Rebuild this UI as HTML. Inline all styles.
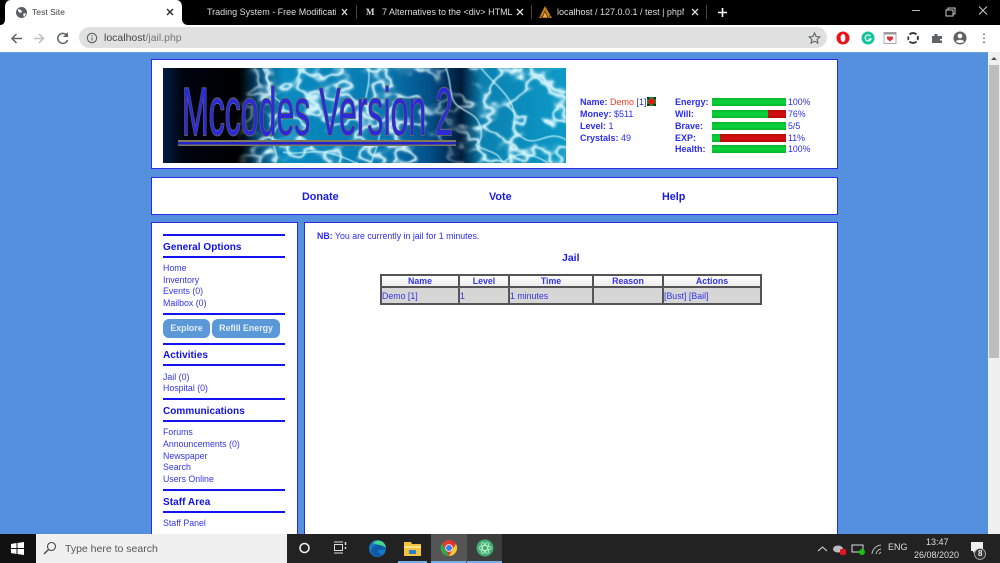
<!DOCTYPE html>
<html style="background:#5590de"><head><meta charset="utf-8"><title>Test Site</title>
<style>
*{box-sizing:border-box}
html,body{margin:0;padding:0;width:1000px;height:563px;overflow:hidden;background:#5590de;font-family:"Liberation Sans",sans-serif}
#w{position:absolute;left:0;top:0;width:1000px;height:563px;overflow:hidden;filter:blur(.35px)}
.a{position:absolute;white-space:nowrap}
.p{position:absolute;background:#fff;border:1px solid #2a2ae0}
.t{font-size:8.8px;color:#2c2cf0;line-height:11px}
.b{font-weight:bold}
.hr{position:absolute;left:163px;width:122px;height:2px;background:#1414f0}
.h{position:absolute;left:163px;font:bold 10px "Liberation Sans",sans-serif;letter-spacing:.05px;color:#1010e8;white-space:nowrap;line-height:12px}
.l{position:absolute;left:163px;font-size:8.8px;color:#3434ea;white-space:nowrap;line-height:11px}
.bar{position:absolute;left:712px;width:74px;height:8px;background:linear-gradient(#05b52d,#0ad53c 50%,#05b52d)}
.bar i{position:absolute;right:0;top:0;height:8px;background:linear-gradient(#b80a0a,#d81010 50%,#b80a0a)}
.btn{position:absolute;top:319px;height:19px;background:#5b98d8;border-radius:6px;color:#e4eefa;font:bold 8.8px/19px "Liberation Sans",sans-serif;text-align:center}
.nav{position:absolute;top:191px;font:bold 10.8px/12px "Liberation Sans",sans-serif;color:#1a1ae6}
.tab{position:absolute;top:7px;font-size:9px;line-height:11px;color:#ddd;white-space:nowrap;overflow:hidden}
td,th{border:2px solid #555;font-size:8.8px;padding:0;color:#3434ea;font-weight:normal;text-align:left}
th{font-weight:bold;text-align:center;background:linear-gradient(#fff,#ececec);height:12px}
td{background:#d6d6d6;height:16px}
</style></head><body><div id="w">

<!-- tab strip -->
<div class="a" style="left:0;top:0;width:1000px;height:25px;background:#000"></div>
<svg class="a" style="left:0;top:0" width="190" height="25"><path d="M0 25C4 25 5 22 5 19V7C5 3 7 0 11 0H176C180 0 182 3 182 7V19C182 22 184 25 188 25Z" fill="#fff"/></svg>
<svg class="a" style="left:15px;top:6px" width="13" height="13" viewBox="0 0 13 13"><circle cx="6.5" cy="6.5" r="5.500" fill="#5a5f66"/><path d="M3 3l3 1 1 2-2 1-2-2zM8 8l2-1 1 1-2 3z" fill="#fff"/></svg>
<div class="tab" style="left:32px;color:#444;font-size:8.600px">Test Site</div>
<svg class="a" style="left:166px;top:8px" width="8" height="8"><path d="M1 1l6 6M7 1l-6 6" stroke="#333" stroke-width="1.500"/></svg>
<div class="tab" style="left:207px;width:129px">Trading System - Free Modificatio</div>
<svg class="a" style="left:341px;top:8px" width="7" height="8"><path d="M1 1l5 6M6 1l-5 6" stroke="#ddd" stroke-width="1.300"/></svg>
<div class="a" style="left:356px;top:5px;width:1px;height:14px;background:#444"></div>
<div class="a" style="left:366px;top:7px;font:bold 9px/11px 'Liberation Serif',serif;color:#ddd">M</div>
<div class="tab" style="left:382px;width:131px">7 Alternatives to the &lt;div&gt; HTML</div>
<svg class="a" style="left:516px;top:8px" width="8" height="8"><path d="M1 1l6 6M7 1l-6 6" stroke="#ddd" stroke-width="1.300"/></svg>
<div class="a" style="left:531px;top:5px;width:1px;height:14px;background:#444"></div>
<svg class="a" style="left:539px;top:6px" width="13" height="12"><path d="M0 12L6 0l7 12z" fill="#c9821f"/><path d="M3 12L6 5l3 7zM1 9l2 3M11 9l-1 3" stroke="#6a3f12" stroke-width="1" fill="#f0b040"/></svg>
<div class="tab" style="left:557px;width:127px">localhost / 127.0.0.1 / test | phpMy</div>
<svg class="a" style="left:691px;top:8px" width="8" height="8"><path d="M1 1l6 6M7 1l-6 6" stroke="#ddd" stroke-width="1.300"/></svg>
<div class="a" style="left:706px;top:5px;width:1px;height:14px;background:#444"></div>
<svg class="a" style="left:717px;top:7px" width="11" height="11"><path d="M5.500 1v9M1 5.500h9" stroke="#fff" stroke-width="1.600"/></svg>
<svg class="a" style="left:908px;top:4px" width="90" height="16"><path d="M4 6.500h8" stroke="#bbb"/><path d="M38 6h7v6h-7zM40 6V4h7v6h-2" stroke="#ccc" fill="none"/><path d="M71 2.500l8 8M79 2.500l-8 8" stroke="#ccc"/></svg>

<!-- toolbar -->
<div class="a" style="left:0;top:25px;width:1000px;height:27px;background:#fff"></div>
<svg class="a" style="left:8px;top:29px" width="66" height="19" fill="none"><path d="M14 9.500H4M8.500 5l-4.500 4.500 4.500 4.500" stroke="#5f6368" stroke-width="1.500"/><path d="M35 9.500H26M31 5l4.500 4.500-4.500 4.500" stroke="#bcbfc3" stroke-width="1.500"/><path d="M58.500 6A5 5 0 1 0 59.500 11" stroke="#5f6368" stroke-width="1.500"/><path d="M60 3v5h-5z" fill="#5f6368"/></svg>
<div class="a" style="left:79px;top:27px;width:748px;height:21px;border-radius:11px;background:#e0e0e1"></div>
<svg class="a" style="left:86px;top:32px" width="12" height="12" fill="none"><circle cx="6" cy="6" r="4.700" stroke="#5f6368" stroke-width="1.100"/><path d="M6 5.500v3M6 3.200v1.200" stroke="#5f6368" stroke-width="1.100"/></svg>
<div class="a" style="left:104px;top:32px;font-size:10.500px;line-height:13px;color:#444">localhost<span style="color:#777">/jail.php</span></div>
<svg class="a" style="left:808px;top:32px" width="13" height="12"><path d="M6.500 1l1.600 3.500 3.800.4-2.800 2.500.8 3.700-3.400-1.900-3.400 1.900.8-3.700L1.100 4.900l3.800-.4z" fill="none" stroke="#5f6368" stroke-width="1.100"/></svg>
<svg class="a" style="left:835px;top:29px" width="155" height="19" fill="none">
<circle cx="8" cy="9" r="6.500" fill="#f0101a"/><ellipse cx="8" cy="9" rx="2.400" ry="4" fill="#fff"/>
<circle cx="33" cy="9" r="6.500" fill="#15c39a"/><path d="M35.500 7a3 3 0 1 0 .5 3h-2.500" stroke="#fff" stroke-width="1.200"/>
<path d="M49 3.500h12v11H49z" fill="#fff" stroke="#aaa"/><path d="M49 3.500h12v2H49z" fill="#999"/><path d="M52 7.500h6v2.500l-3 2.500-3-2.500z" fill="#e0303a"/>
<path d="M74.500 5.500a5 5 0 0 1 7 0M81.500 12.500a5 5 0 0 1-7 0M73.500 7.500a5 5 0 0 0 0 3.500M82.500 7a5 5 0 0 1 0 4" stroke="#333" stroke-width="1.800"/>
<path d="M97 7h2.500V5h3v2H107v3h-2v1.500h2V14h-10z" fill="#5f6368"/>
<circle cx="125" cy="9" r="6.500" fill="#5f6368"/><circle cx="125" cy="7" r="2.300" fill="#fff"/><path d="M120.800 12.500c1.500-2.400 6.900-2.400 8.400 0-2 2-6.400 2-8.400 0z" fill="#fff"/>
<path d="M149 4.500v1.500M149 8.500V10M149 12.500V14" stroke="#5f6368" stroke-width="1.500"/>
</svg>

<!-- scrollbar -->
<div class="a" style="left:988px;top:52px;width:12px;height:482px;background:#f0f0f0"></div>
<div class="a" style="left:989px;top:65px;width:10px;height:293px;background:#bdbdbd"></div>
<svg class="a" style="left:990px;top:56px" width="8" height="5"><path d="M1 4l3-3 3 3z" fill="#555"/></svg>
<div class="a" style="left:0;top:52px;width:988px;height:1px;background:#6ba0e2"></div>

<!-- header panel -->
<div class="p" style="left:151px;top:59px;width:687px;height:110px"></div>
<svg class="a" style="left:163px;top:68px" width="403" height="95" viewBox="0 0 403 95">
<defs>
<linearGradient id="g"><stop offset="0" stop-color="#021e42"/><stop offset=".05" stop-color="#000410"/><stop offset=".19" stop-color="#000"/><stop offset=".24" stop-color="#024878"/><stop offset=".3" stop-color="#0a8cc0"/><stop offset=".55" stop-color="#0878b0"/><stop offset=".66" stop-color="#03508a"/><stop offset=".74" stop-color="#011a38"/><stop offset=".79" stop-color="#0a80b0"/><stop offset="1" stop-color="#0d9ac8"/></linearGradient>
<linearGradient id="fade"><stop offset=".18" stop-color="#000"/><stop offset=".26" stop-color="#fff"/><stop offset=".62" stop-color="#fff"/><stop offset=".72" stop-color="#444"/><stop offset=".78" stop-color="#fff"/></linearGradient>
<mask id="m"><rect width="403" height="95" fill="url(#fade)"/></mask>
<filter id="veins" x="0" y="0" width="100%" height="100%">
<feTurbulence type="fractalNoise" baseFrequency=".028 .035" numOctaves="3" seed="7"/>
<feColorMatrix type="matrix" values="0 0 0 0 .72  0 0 0 0 .96  0 0 0 0 1  1.600 0 0 0 -.3"/>
<feComponentTransfer><feFuncA type="table" tableValues="0 0 0 0 .15 1 .15 0 0 0 0 0"/></feComponentTransfer>
<feGaussianBlur stdDeviation=".4"/>
</filter>
<filter id="bl"><feGaussianBlur stdDeviation=".6"/></filter>
</defs>
<rect width="403" height="95" fill="url(#g)"/>
<g mask="url(#m)"><rect width="403" height="95" filter="url(#veins)"/></g>
<g fill="none" stroke="#c8f6ff" stroke-width="1.300" filter="url(#bl)" opacity=".9">
<path d="M100 0C108 15 105 25 115 32S120 50 112 62 118 85 112 95"/>
<path d="M205 0C210 20 195 35 208 45S218 70 208 95"/>
<path d="M283 0C290 20 285 30 295 38S315 45 318 62 305 75 318 80 335 85 340 95"/>
<path d="M318 0C330 15 345 25 350 40S345 60 360 70 385 60 403 72"/>
<path d="M120 84C135 88 150 80 170 86S190 95 195 95M340 95C350 85 365 82 385 95"/>
</g>
<text x="19" y="67" font-family="Liberation Sans,sans-serif" font-size="68" textLength="271" lengthAdjust="spacingAndGlyphs" fill="#2a2ad8" stroke="#6e6a58" stroke-width="1.800" paint-order="stroke">Mccodes Version 2</text>
<rect x="15" y="72" width="278" height="6" fill="#7f7a5e"/>
<rect x="15" y="74" width="278" height="2.500" fill="#2222c8"/>
</svg>

<div class="a t" style="left:580px;top:97px;font-size:9px"><span class="b">Name:</span> <span style="color:#f03a1a">Demo</span> [1]</div>
<svg class="a" style="left:647px;top:97px" width="9" height="9"><rect width="9" height="9" fill="#1a8a2a"/><path d="M0 0l2 2M9 0L7 2M0 9l2-2M9 9L7 7" stroke="#111" stroke-width="1.500"/><circle cx="4.500" cy="4.500" r="3" fill="#ee1111"/></svg>
<div class="a t" style="left:580px;top:109px;font-size:9px"><span class="b">Money:</span> $511</div>
<div class="a t" style="left:580px;top:121px;font-size:9px"><span class="b">Level:</span> 1</div>
<div class="a t" style="left:580px;top:133px;font-size:9px"><span class="b">Crystals:</span> 49</div>

<div class="a t b" style="left:675px;top:97px;font-size:9px">Energy:</div>
<div class="a t b" style="left:675px;top:109px;font-size:9px">Will:</div>
<div class="a t b" style="left:675px;top:121px;font-size:9px">Brave:</div>
<div class="a t b" style="left:675px;top:133px;font-size:9px">EXP:</div>
<div class="a t b" style="left:675px;top:144px;font-size:9px">Health:</div>
<div class="bar" style="top:98px"></div>
<div class="bar" style="top:110px"><i style="width:18px"></i></div>
<div class="bar" style="top:122px"></div>
<div class="bar" style="top:134px"><i style="width:66px"></i></div>
<div class="bar" style="top:145px"></div>
<div class="a t" style="left:788px;top:97px">100%</div>
<div class="a t" style="left:788px;top:109px">76%</div>
<div class="a t" style="left:788px;top:121px">5/5</div>
<div class="a t" style="left:788px;top:133px">11%</div>
<div class="a t" style="left:788px;top:144px">100%</div>

<!-- nav panel -->
<div class="p" style="left:151px;top:177px;width:687px;height:38px"></div>
<div class="nav" style="left:302px">Donate</div>
<div class="nav" style="left:489px">Vote</div>
<div class="nav" style="left:662px">Help</div>

<!-- sidebar -->
<div class="p" style="left:151px;top:222px;width:147px;height:330px"></div>
<div class="hr" style="top:234px"></div>
<div class="h" style="top:242px">General Options</div>
<div class="hr" style="top:256px"></div>
<div class="l" style="top:263px">Home</div>
<div class="l" style="top:275px">Inventory</div>
<div class="l" style="top:286px">Events (0)</div>
<div class="l" style="top:298px">Mailbox (0)</div>
<div class="hr" style="top:313px"></div>
<div class="btn" style="left:163px;width:47px">Explore</div>
<div class="btn" style="left:212px;width:68px">Refill Energy</div>
<div class="hr" style="top:343px"></div>
<div class="h" style="top:350px">Activities</div>
<div class="hr" style="top:364px"></div>
<div class="l" style="top:372px">Jail (0)</div>
<div class="l" style="top:383px">Hospital (0)</div>
<div class="hr" style="top:398px"></div>
<div class="h" style="top:406px">Communications</div>
<div class="hr" style="top:420px"></div>
<div class="l" style="top:427px">Forums</div>
<div class="l" style="top:439px">Announcements (0)</div>
<div class="l" style="top:451px">Newspaper</div>
<div class="l" style="top:462px">Search</div>
<div class="l" style="top:474px">Users Online</div>
<div class="hr" style="top:489px"></div>
<div class="h" style="top:497px">Staff Area</div>
<div class="hr" style="top:511px"></div>
<div class="l" style="top:518px">Staff Panel</div>

<!-- main -->
<div class="p" style="left:304px;top:222px;width:534px;height:330px"></div>
<div class="a t" style="left:317px;top:231px"><span class="b">NB:</span> You are currently in jail for 1 minutes.</div>
<div class="a b" style="left:562px;top:252px;font-size:10.500px;line-height:13px;color:#1a1ae6">Jail</div>
<table class="a" style="left:380px;top:274px;width:382px;height:31px;border-collapse:collapse;table-layout:fixed">
<tr><th style="width:78px">Name</th><th style="width:50px">Level</th><th style="width:84px">Time</th><th style="width:70px">Reason</th><th>Actions</th></tr>
<tr><td>Demo [1]</td><td>1</td><td>1 minutes</td><td></td><td>[Bust] [Bail]</td></tr>
</table>

<!-- taskbar -->
<div class="a" style="left:0;top:534px;width:1000px;height:29px;background:#222"></div>
<div class="a" style="left:0;top:534px;width:36px;height:29px;background:#111"></div>
<svg class="a" style="left:11px;top:542px" width="13" height="13"><path d="M0 2l5.500-1v5H0zM6.500 1L13 0v6H6.500zM0 7h5.500v5L0 11zM6.500 7H13v6l-6.500-1z" fill="#fff"/></svg>
<div class="a" style="left:36px;top:534px;width:251px;height:29px;background:#f0f0f0"></div>
<svg class="a" style="left:43px;top:541px" width="14" height="15" fill="none"><circle cx="8.500" cy="5.500" r="4" stroke="#444" stroke-width="1.100"/><path d="M5.500 8.500L1 13" stroke="#444" stroke-width="1.300"/></svg>
<div class="a" style="left:65px;top:542px;font-size:10.500px;line-height:14px;color:#555">Type here to search</div>
<svg class="a" style="left:297px;top:540px" width="16" height="16"><circle cx="7.500" cy="8" r="4.500" fill="none" stroke="#eee" stroke-width="1.600"/></svg>
<svg class="a" style="left:333px;top:541px" width="14" height="13" fill="none" stroke="#ddd"><path d="M1.500 3.500h8v6h-8zM1 1h9M1 12h9"/><path d="M12.500 1v3M12.500 6v2" stroke-width="1.500"/></svg>
<svg class="a" style="left:368px;top:539px" width="19" height="19"><circle cx="9.500" cy="9.500" r="8.500" fill="#1a78c8"/><path d="M3 12C5 4 15 3 18 9c0 2-3 2-6 2-3 0-3 2-1 3l3 2c-4 3-10 1-11-4z" fill="#0f5aa6"/><path d="M5 4c4-4 12-3 13 5-3-3-9-3-13-5z" fill="#44d68a"/></svg>
<svg class="a" style="left:404px;top:541px" width="17" height="15"><path d="M0 1h7l1 2h9v12H0z" fill="#f3c33f"/><path d="M0 5h17v2H0z" fill="#fbe38a"/><rect x="5" y="9" width="7" height="4" fill="#2a80c8"/></svg>
<div class="a" style="left:431px;top:534px;width:36px;height:29px;background:#555"></div>
<svg class="a" style="left:440px;top:539px" width="18" height="18"><circle cx="9" cy="9" r="8" fill="#dd4030"/><path d="M9 1a8 8 0 0 1 7 4H9z" fill="#e0352b"/><path d="M2 4.500L6 12l3 5A8 8 0 0 1 2 4.500z" fill="#2fa84f"/><path d="M16 5a8 8 0 0 1-7 12l3.500-6.500z" fill="#f8c92d"/><circle cx="9" cy="9" r="3.800" fill="#fff"/><circle cx="9" cy="9" r="3" fill="#3a7fe8"/></svg>
<div class="a" style="left:467px;top:534px;width:35px;height:29px;background:#3d3d3d"></div>
<svg class="a" style="left:476px;top:539px" width="18" height="18" fill="none"><circle cx="9" cy="9" r="8.500" fill="#3fae6e"/><g stroke="#c6f0d6" stroke-width=".8"><ellipse cx="9" cy="9" rx="6" ry="2.500"/><ellipse cx="9" cy="9" rx="6" ry="2.500" transform="rotate(60 9 9)"/><ellipse cx="9" cy="9" rx="6" ry="2.500" transform="rotate(120 9 9)"/></g></svg>
<div class="a" style="left:398px;top:561px;width:29px;height:2px;background:#79aee0"></div>
<div class="a" style="left:431px;top:561px;width:35px;height:2px;background:#79aee0"></div>
<div class="a" style="left:467px;top:561px;width:35px;height:2px;background:#79aee0"></div>

<svg class="a" style="left:816px;top:542px" width="80" height="14" fill="none">
<path d="M2 9l4.500-4 4.500 4" stroke="#ddd" stroke-width="1"/>
<ellipse cx="22" cy="7" rx="5" ry="3.500" fill="#bbb"/><rect x="24" y="7" width="6" height="6" rx="1.500" fill="#e81123"/>
<path d="M36 3h11v7H36z" stroke="#ddd"/><circle cx="46" cy="10" r="3" fill="#16c60c"/>
<path d="M56 12a10 10 0 0 1 9-9M60 12a6 6 0 0 1 5-5M63 12l2-2" stroke="#bbb"/>
</svg>
<div class="a" style="left:888px;top:542px;font-size:9px;line-height:11px;color:#ddd">ENG</div>
<div class="a" style="left:926px;top:536px;font-size:9px;line-height:12px;color:#ddd">13:47</div>
<div class="a" style="left:914px;top:549px;font-size:9px;line-height:12px;color:#ddd">26/08/2020</div>
<svg class="a" style="left:969px;top:541px" width="20" height="20" fill="none"><path d="M2 1h12v9H6l-2 2v-2H2z" fill="#eee"/><circle cx="11" cy="13" r="5.500" fill="#333" stroke="#bbb" stroke-width=".8"/></svg>
<div class="a" style="left:978px;top:549px;font-size:8px;line-height:10px;font-weight:bold;color:#eee">8</div>
</div></body></html>
